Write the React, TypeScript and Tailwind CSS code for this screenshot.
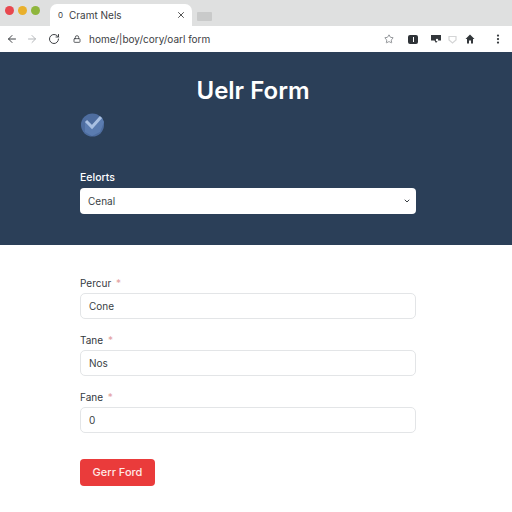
import { ArrowLeft, ArrowRight, ChevronDown, EllipsisVertical, Lock, RotateCw, Star, X } from "lucide-react";

const fields = [
  { label: "Percur", value: "Cone", gap: "mb-[14px]" },
  { label: "Tane", value: "Nos", gap: "mb-[14px]" },
  { label: "Fane", value: "0", gap: "mb-[25px]" },
];

function BrowserBar() {
  return (
    <div className="h-[52px] bg-white">
      <div className="flex h-[26px] items-end bg-[#dfe0e0] pl-[5px]">
        <div className="mb-[6px] flex gap-[4px] self-center">
          <span className="h-[9px] w-[9px] rounded-full bg-[#e8484f]" />
          <span className="h-[9px] w-[9px] rounded-full bg-[#e9b02c]" />
          <span className="h-[9px] w-[9px] rounded-full bg-[#8fb63c]" />
        </div>
        <div className="ml-[10px] flex h-[22px] w-[142px] items-center rounded-t-[7px] bg-white pl-[8px] pr-[6px] text-[10px] text-[#3c4043]">
          <span className="w-[11px] text-[8px]">0</span>
          <span className="flex-1">Cramt Nels</span>
          <X size={10} strokeWidth={2} className="text-[#333]" />
        </div>
        <div className="mb-[5px] ml-[5px] h-[9px] w-[15px] rounded-[1px] bg-[#c9caca]" />
      </div>
      <div className="flex h-[26px] items-center pl-[6px] pr-[8px] text-[#3f4246]">
        <ArrowLeft size={12} strokeWidth={2} />
        <ArrowRight size={12} strokeWidth={2} className="ml-[8px] text-[#b4b7ba]" />
        <RotateCw size={12} strokeWidth={2} className="ml-[10px]" />
        <Lock size={8} strokeWidth={2.5} className="ml-[13px]" />
        <span className="ml-[8px] text-[10px] text-[#3c4043]">home/|boy/cory/oarl form</span>
        <Star size={10} strokeWidth={2} className="ml-auto text-[#7d8185]" />
        <span className="ml-[14px] flex h-[9px] w-[10px] items-center justify-center rounded-[2px] bg-[#2f3338]">
          <span className="h-[5px] w-[1px] bg-white" />
        </span>
        <svg width="10" height="10" viewBox="0 0 10 10" className="ml-[13px]">
          <path d="M0 1h10v5.500H7L5 9 3.500 6.500H0z" fill="#33373b" />
          <circle cx="6" cy="6" r="1.200" fill="#fff" />
        </svg>
        <svg width="9" height="9" viewBox="0 0 9 9" className="ml-[7px]">
          <path d="M1 1.500h7v3.500L4.500 8 1 5z" fill="none" stroke="#d4d5d6" strokeWidth="1.200" />
        </svg>
        <svg width="10" height="10" viewBox="0 0 10 10" className="ml-[8px]">
          <path d="M5 .5 9.500 5H8v4.500H6V6.500H4v3H2V5H.5z" fill="#33373b" />
        </svg>
        <EllipsisVertical size={12} strokeWidth={2.5} className="ml-[17px] text-[#33373b]" />
      </div>
    </div>
  );
}

export default function App() {
  return (
    <div className="h-[512px] w-[512px] overflow-hidden bg-white font-['Inter','Liberation_Sans',sans-serif]">
      <BrowserBar />
      <div className="h-[193px] bg-[#2b3f58] px-[80px] pt-[23px]">
        <h1 className="mr-[6px] text-center text-[24px] font-semibold leading-[32px] text-white">Uelr Form</h1>
        <svg width="25" height="24" viewBox="0 0 25 24" className="mt-[6px]">
          <circle cx="12.500" cy="12" r="11.500" fill="#4e6d9f" />
          <path d="M5 8.500 12 15 22 4.500 24 9 20 19 12 23 5 19z" fill="#5b7cb0" />
          <path d="M6 8 12 14 21 4" fill="none" stroke="#a9c0e2" strokeWidth="3" />
        </svg>
        <div className="mt-[34px] text-[10.500px] font-medium leading-[14px] text-white">Eelorts</div>
        <div className="mt-[3px] flex h-[26px] w-[336px] items-center justify-between rounded-[4px] bg-white pl-[8px] pr-[5px] text-[10px] text-[#3a3f45]">
          <span>Cenal</span>
          <ChevronDown size={8} strokeWidth={3} className="text-[#3a3f45]" />
        </div>
      </div>
      <div className="px-[80px] pt-[31px]">
        {fields.map((f) => (
          <div key={f.label} className={f.gap}>
            <div className="text-[10px] leading-[14px] text-[#33383e]">
              {f.label} <span className="ml-[2px] text-[#e3a0a0]">*</span>
            </div>
            <div className="mt-[3px] flex h-[26px] w-[336px] items-center rounded-[5px] border border-[#e3e5e7] bg-white pl-[8px] text-[10px] text-[#3a3f45]">
              {f.value}
            </div>
          </div>
        ))}
        <button className="h-[27px] w-[75px] rounded-[4px] bg-[#ea3b3b] text-[11px] font-medium text-[#ffe9e6]">Gerr Ford</button>
      </div>
    </div>
  );
}
